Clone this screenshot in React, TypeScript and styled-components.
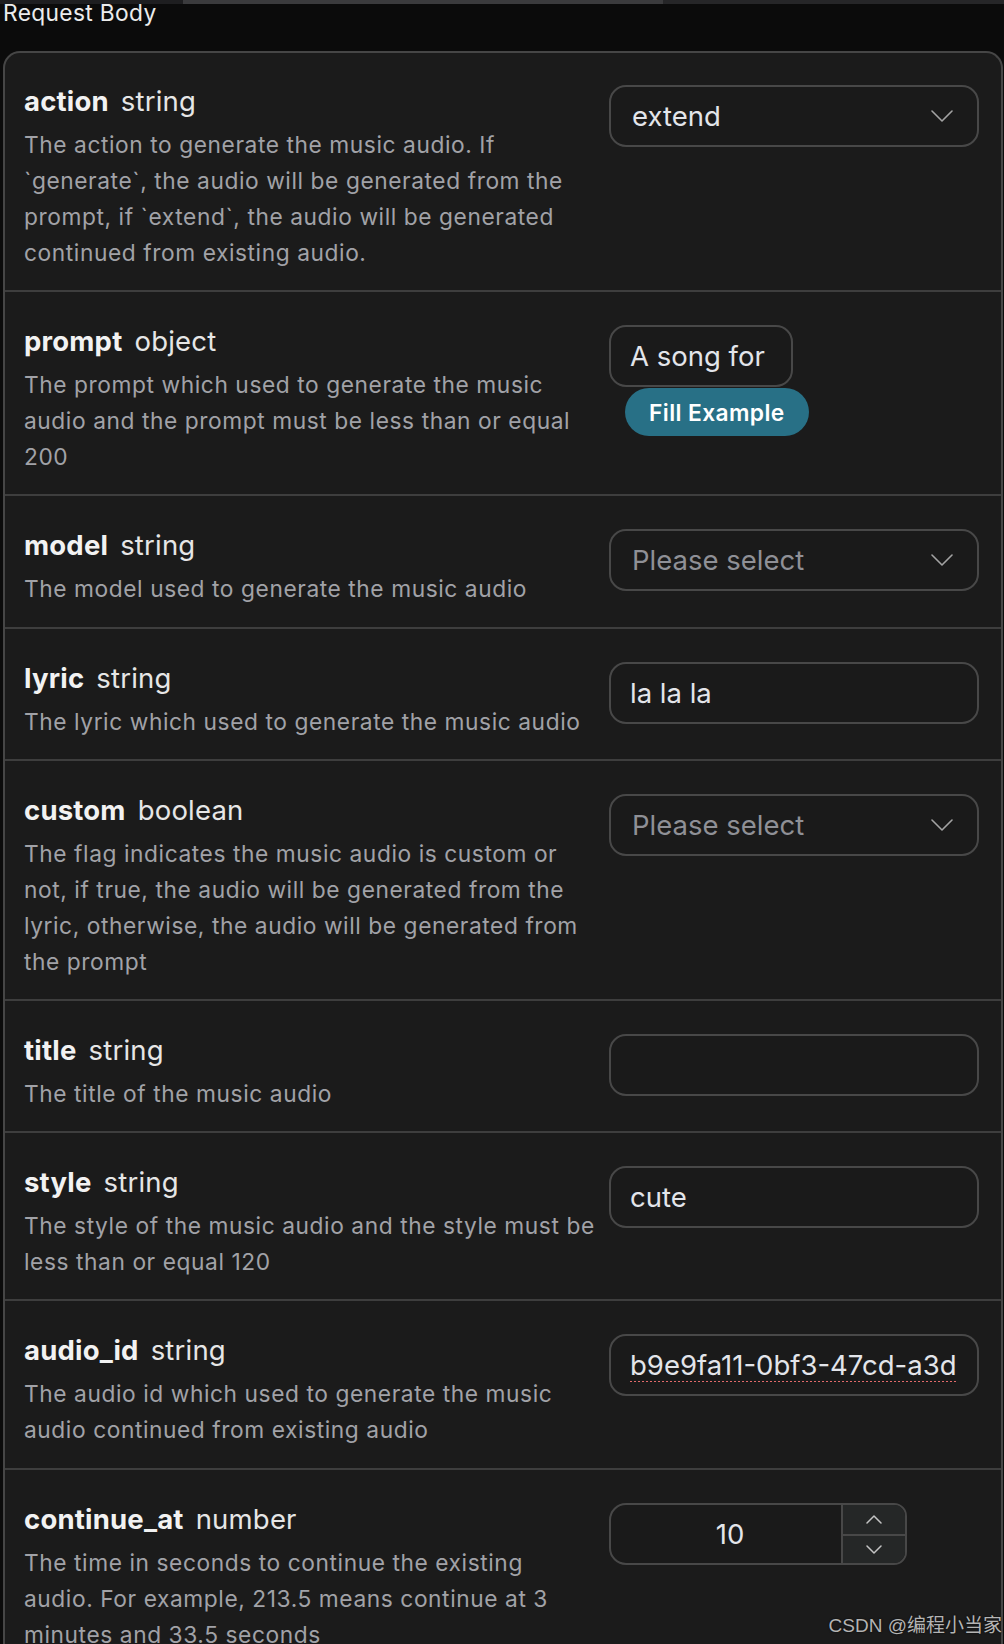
import * as React from 'react';
import styled, { createGlobalStyle } from 'styled-components';

const GlobalStyle = createGlobalStyle`
  html, body {
    margin: 0;
    padding: 0;
    background: #0b0b0b;
    overflow: hidden;
  }
  body {
    font-family: Inter, 'Noto Sans', 'Liberation Sans', sans-serif;
    -webkit-font-smoothing: antialiased;
  }
`;

const Page = styled.div`
  position: relative;
  height: 1644px;
  padding: 0 1px 0 3px;
  box-sizing: border-box;
  overflow: hidden;
`;

const TopEdge = styled.div`
  position: absolute;
  top: 0;
  left: 0;
  right: 0;
  height: 4px;
  display: grid;
  grid-template-columns: 183px 480px 1fr;
  z-index: 2;
`;

const EdgePart = styled.div<{ $tone: string }>`
  background: ${(p) => p.$tone};
`;

const Heading = styled.div`
  font-size: 22.75px;
  line-height: 27px;
  letter-spacing: 0.35px;
  color: #ececec;
  margin-top: -1px;
`;

const Card = styled.div`
  margin-top: 25px;
  background: #1b1b1b;
  border: 2px solid #464646;
  border-bottom: none;
  border-radius: 17px 17px 0 0;
`;

const Row = styled.div`
  display: grid;
  grid-template-columns: 1fr 370px;
  column-gap: 13px;
  align-items: start;
  padding: 29px 22px 19.2px 19px;
  &:first-child {
    padding-top: 28px;
  }
  & + & {
    border-top: 2px solid #3e3e3e;
  }
`;

const Info = styled.div`
  display: flex;
  flex-direction: column;
  gap: 6px;
`;

const Title = styled.div`
  display: flex;
  align-items: baseline;
  gap: 12px;
  font-size: 27.5px;
  line-height: 40px;
  letter-spacing: 0.2px;
`;

const Name = styled.span`
  font-weight: 700;
  color: #f2f2f2;
`;

const Type = styled.span`
  font-weight: 400;
  color: #e6e6e6;
`;

const Description = styled.div`
  font-size: 22.75px;
  line-height: 36px;
  letter-spacing: 0.57px;
  color: #a1a2a7;
`;

const Control = styled.div`
  display: flex;
  flex-direction: column;
  align-items: flex-start;
  padding-top: 4px;
`;

const Field = styled.div<{ $width?: number }>`
  width: ${(p) => (p.$width ? `${p.$width}px` : '100%')};
  height: 62px;
  box-sizing: border-box;
  border: 2px solid #484848;
  border-radius: 17px;
  background: #1a1a1a;
  display: flex;
  align-items: center;
  padding: 0 21px 0 19px;
  font-size: 27.5px;
`;

const FieldText = styled.span<{ $muted?: boolean }>`
  flex: 1;
  min-width: 0;
  overflow: hidden;
  white-space: nowrap;
  color: ${(p) => (p.$muted ? '#8f9096' : '#e3e5ea')};
`;

const SpellText = styled.span`
  text-decoration: underline dotted #e26a6a;
  text-decoration-thickness: 2px;
  text-underline-offset: 6px;
`;

const SelectValue = styled(FieldText)`
  padding-left: 2px;
`;

const Chevron = styled.svg`
  flex: none;
  width: 22px;
  height: 12px;
  margin-right: 3px;
`;

const FillButton = styled.button`
  margin: 1px 0 0 16px;
  height: 48px;
  padding: 0 24px;
  border: none;
  border-radius: 24px;
  background: #287086;
  color: #ffffff;
  font-family: inherit;
  font-size: 22.75px;
  font-weight: 600;
  letter-spacing: 0.4px;
`;

const NumberBox = styled.div`
  width: 298px;
  height: 62px;
  box-sizing: border-box;
  border: 2px solid #484848;
  border-radius: 17px 13px 13px 17px;
  display: grid;
  grid-template-columns: 1fr 64px;
  overflow: hidden;
  background: #1a1a1a;
`;

const NumberValue = styled.div`
  display: flex;
  align-items: center;
  justify-content: center;
  padding-left: 8px;
  font-size: 27.5px;
  color: #e3e5ea;
`;

const Stepper = styled.div`
  display: grid;
  grid-template-rows: 1fr 1fr;
  border-left: 2px solid #484848;
  background: #252727;
`;

const StepButton = styled.div`
  display: flex;
  align-items: center;
  justify-content: center;
  & + & {
    border-top: 2px solid #484848;
  }
`;

const StepIcon = styled.svg`
  width: 16px;
  height: 9px;
`;

const Watermark = styled.div`
  position: absolute;
  right: 2px;
  bottom: 6px;
  font-family: 'Liberation Sans', 'Noto Sans CJK SC', sans-serif;
  font-size: 19px;
  line-height: 24px;
  color: #b4b4b4;
  text-shadow: 0 0 2px rgba(0, 0, 0, 0.8);
`;

const ChevronDown = () => (
  <Chevron viewBox="0 0 22 12" fill="none">
    <path d="M1 1l10 10L21 1" stroke="#a3a3a3" strokeWidth="1.6" strokeLinecap="round" strokeLinejoin="round" />
  </Chevron>
);

const Select = ({ value, placeholder }: { value?: string; placeholder?: string }) => (
  <Field>
    <SelectValue $muted={!value}>{value ?? placeholder}</SelectValue>
    <ChevronDown />
  </Field>
);

const NumberInput = ({ value }: { value: number }) => (
  <NumberBox>
    <NumberValue>{value}</NumberValue>
    <Stepper>
      <StepButton>
        <StepIcon viewBox="0 0 16 9" fill="none">
          <path d="M1 8l7-7 7 7" stroke="#c4c4c4" strokeWidth="1.5" strokeLinecap="round" strokeLinejoin="round" />
        </StepIcon>
      </StepButton>
      <StepButton>
        <StepIcon viewBox="0 0 16 9" fill="none">
          <path d="M1 1l7 7 7-7" stroke="#c4c4c4" strokeWidth="1.5" strokeLinecap="round" strokeLinejoin="round" />
        </StepIcon>
      </StepButton>
    </Stepper>
  </NumberBox>
);

type Param = {
  name: string;
  type: string;
  description: string;
  control: React.ReactNode;
};

const params: Param[] = [
  {
    name: 'action',
    type: 'string',
    description:
      'The action to generate the music audio. If `generate`, the audio will be generated from the prompt, if `extend`, the audio will be generated continued from existing audio.',
    control: <Select value="extend" />,
  },
  {
    name: 'prompt',
    type: 'object',
    description:
      'The prompt which used to generate the music audio and the prompt must be less than or equal 200',
    control: (
      <>
        <Field $width={184}>
          <FieldText>A song for cats</FieldText>
        </Field>
        <FillButton>Fill Example</FillButton>
      </>
    ),
  },
  {
    name: 'model',
    type: 'string',
    description: 'The model used to generate the music audio',
    control: <Select placeholder="Please select" />,
  },
  {
    name: 'lyric',
    type: 'string',
    description: 'The lyric which used to generate the music audio',
    control: (
      <Field>
        <FieldText>la la la</FieldText>
      </Field>
    ),
  },
  {
    name: 'custom',
    type: 'boolean',
    description:
      'The flag indicates the music audio is custom or not, if true, the audio will be generated from the lyric, otherwise, the audio will be generated from the prompt',
    control: <Select placeholder="Please select" />,
  },
  {
    name: 'title',
    type: 'string',
    description: 'The title of the music audio',
    control: (
      <Field>
        <FieldText />
      </Field>
    ),
  },
  {
    name: 'style',
    type: 'string',
    description: 'The style of the music audio and the style must be less than or equal 120',
    control: (
      <Field>
        <FieldText>cute</FieldText>
      </Field>
    ),
  },
  {
    name: 'audio_id',
    type: 'string',
    description: 'The audio id which used to generate the music audio continued from existing audio',
    control: (
      <Field>
        <FieldText>
          <SpellText>b9e9fa11-0bf3-47cd-a3d</SpellText>
        </FieldText>
      </Field>
    ),
  },
  {
    name: 'continue_at',
    type: 'number',
    description:
      'The time in seconds to continue the existing audio. For example, 213.5 means continue at 3 minutes and 33.5 seconds',
    control: <NumberInput value={10} />,
  },
];

export default function App() {
  return (
    <Page>
      <GlobalStyle />
      <TopEdge>
        <EdgePart $tone="#1e1e20" />
        <EdgePart $tone="#3b3b3d" />
        <EdgePart $tone="#262628" />
      </TopEdge>
      <Heading>Request Body</Heading>
      <Card>
        {params.map((param) => (
          <Row key={param.name}>
            <Info>
              <Title>
                <Name>{param.name}</Name>
                <Type>{param.type}</Type>
              </Title>
              <Description>{param.description}</Description>
            </Info>
            <Control>{param.control}</Control>
          </Row>
        ))}
      </Card>
      <Watermark>CSDN @编程小当家</Watermark>
    </Page>
  );
}
